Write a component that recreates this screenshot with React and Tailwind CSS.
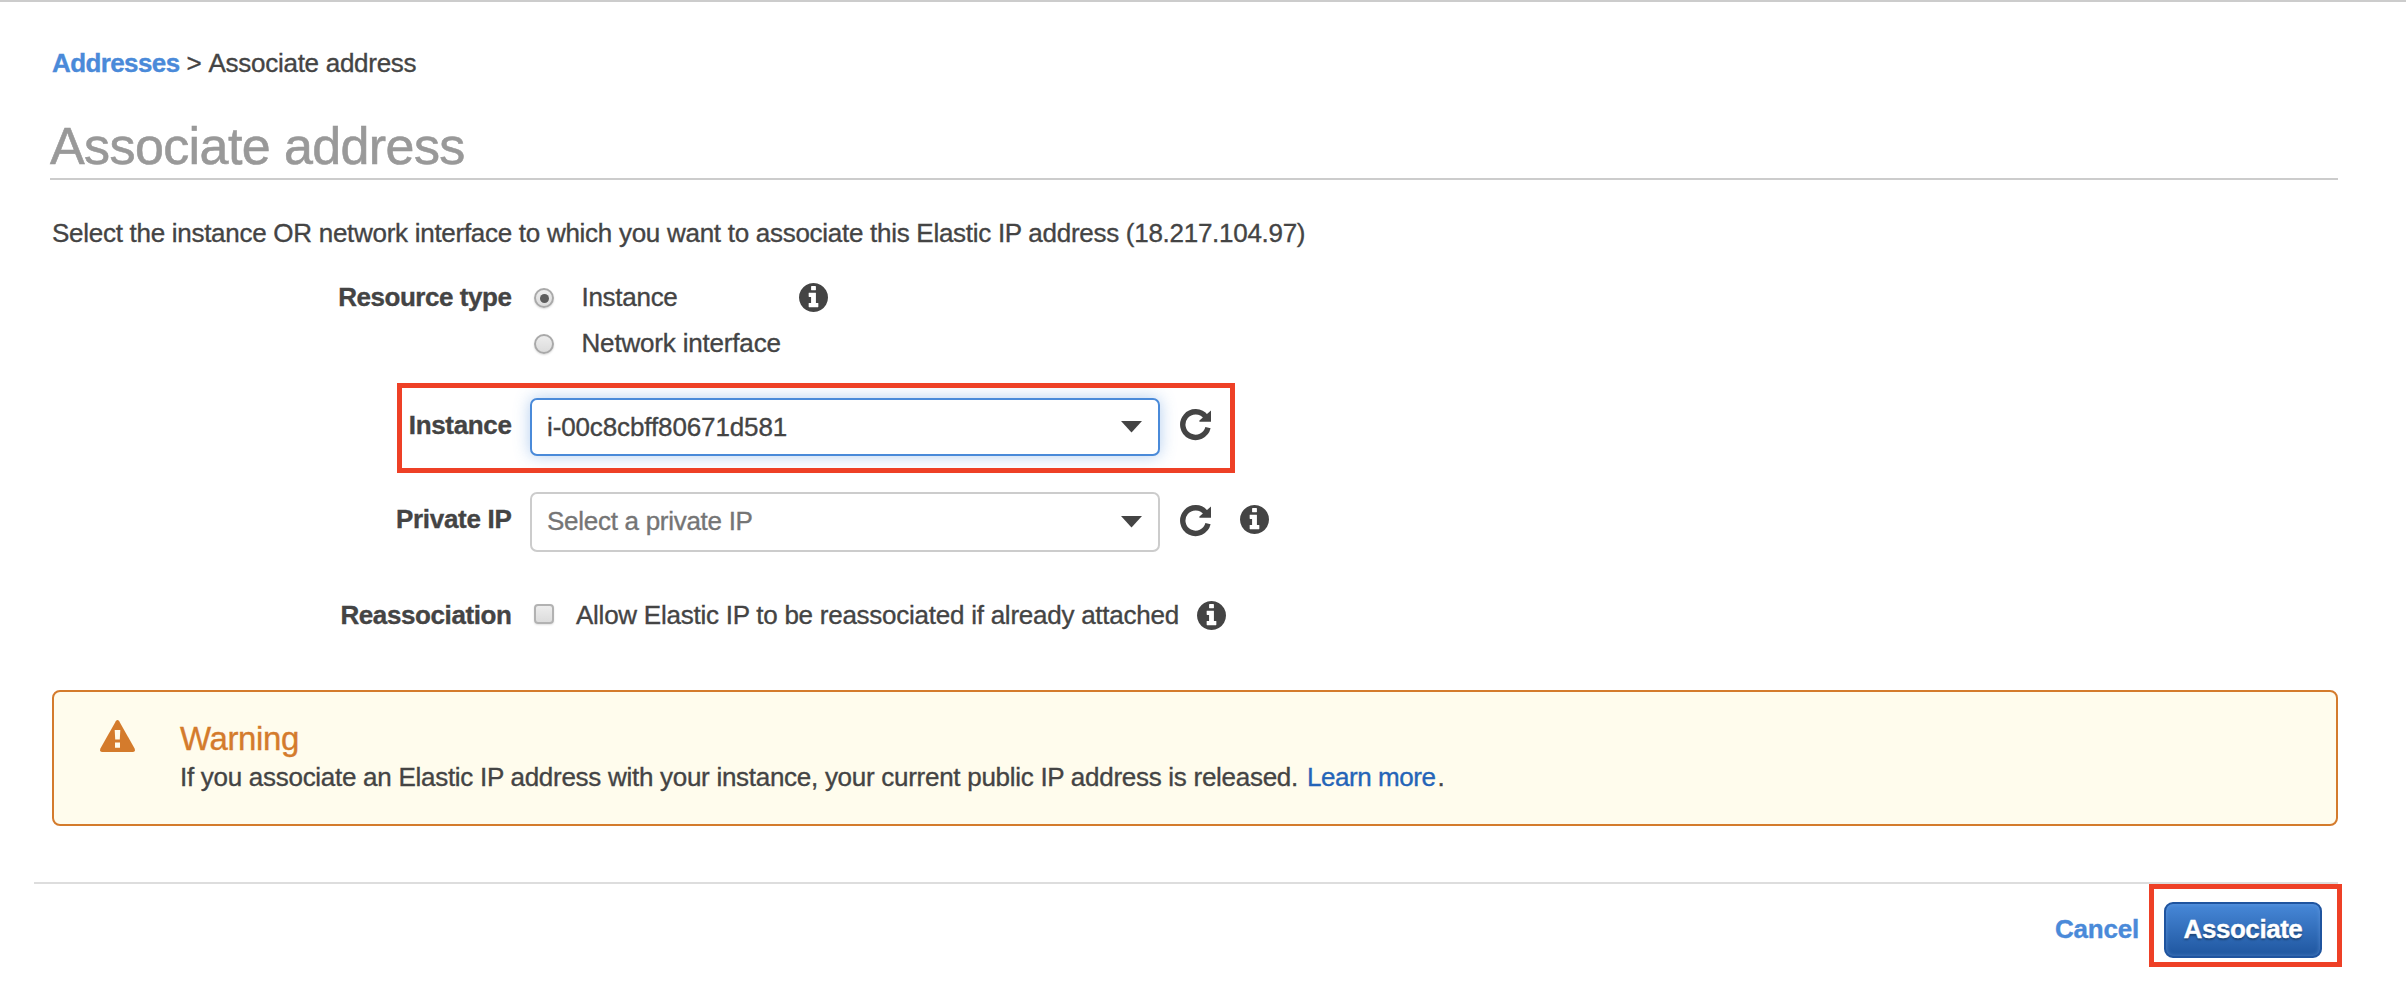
function InfoIcon({ className = "" }) {
  return (
    <svg className={`h-[29px] w-[29px] shrink-0 ${className}`} viewBox="128 128 1536 1536" fill="#444444">
      <path d="M1152 1376v-160q0-14-9-23t-23-9h-96v-512q0-14-9-23t-23-9h-320q-14 0-23 9t-9 23v160q0 14 9 23t23 9h96v320h-96q-14 0-23 9t-9 23v160q0 14 9 23t23 9h448q14 0 23-9t9-23zm-128-896v-160q0-14-9-23t-23-9h-192q-14 0-23 9t-9 23v160q0 14 9 23t23 9h192q14 0 23-9t9-23zm640 416q0 209-103 385.5t-279.5 279.5-385.5 103-385.5-103-279.5-279.5-103-385.5 103-385.5 279.5-279.5 385.5-103 385.5 103 279.5 279.5 103 385.5z" />
    </svg>
  );
}

function RefreshIcon({ className = "" }) {
  return (
    <svg className={`h-8 w-8 shrink-0 ${className}`} viewBox="0 0 32 32">
      <path d="M28 18.7A12.8 12.8 0 1 1 25.8 7.9" fill="none" stroke="#444444" strokeWidth="5.4" />
      <path d="M31 1.6V12.8H19.4V11.4Z" fill="#444444" />
    </svg>
  );
}

function WarningIcon() {
  return (
    <svg className="h-8 w-[35px] shrink-0" viewBox="0 0 35 32">
      <path
        d="M15.8 1.2Q17.5-1 19.2 1.2L34.6 28.6Q35.6 31.8 33 32H2Q-.6 31.8.4 28.6Z"
        fill="#d47b2c"
      />
      <path d="M14.7 10h5.6l-.5 9.6h-4.6ZM15 22.4h5v5.3h-5Z" fill="#fffced" />
    </svg>
  );
}

function Caret() {
  return (
    <svg className="h-3 w-[21px] shrink-0" viewBox="0 0 21 12">
      <path d="M0 0H21L10.5 11.6Z" fill="#444444" />
    </svg>
  );
}

function Radio({ checked }) {
  return (
    <span className="flex h-5 w-5 shrink-0 items-center justify-center rounded-full border-2 border-[#a9a9a9] bg-linear-to-b from-[#ededed] to-[#dcdcdc] shadow-[0_1px_2px_rgba(0,0,0,0.15)]">
      {checked && <span className="h-[9px] w-[9px] rounded-full bg-[#5c5c5c]" />}
    </span>
  );
}

function Label({ children, className = "" }) {
  return (
    <div className={`w-[461px] shrink-0 pr-[1.5px] text-right font-bold ${className}`}>{children}</div>
  );
}

function Highlight({ className }) {
  return <span className={`pointer-events-none absolute border-[5px] border-[#ee4026] ${className}`} />;
}

export default function App() {
  return (
    <div className="h-[986px] w-[2406px] overflow-hidden border-t-2 border-[#cccccc] bg-white pt-[45px] font-['Liberation_Sans',Arial,sans-serif] text-[26px] leading-8 tracking-[-0.28px] whitespace-nowrap text-[#444444] [-webkit-text-stroke:0.35px]">
      <main className="ml-[52px] w-[2286px]">
        <nav className="flex">
          <a className="font-bold tracking-[-0.6px] text-[#4a8ad9]">Addresses</a>
          <span className="ml-[7px] w-[22px]">&gt;</span>
          <span>Associate address</span>
        </nav>

        <h1 className="mt-[37px] -ml-[2px] h-16 border-b-2 border-[#cccccc] text-[52px] leading-[60px] tracking-[-0.6px] text-[#999999] [-webkit-text-stroke:0.6px]">
          Associate address
        </h1>

        <p className="mt-[37px]">
          Select the instance OR network interface to which you want to associate this Elastic IP address
          (18.217.104.97)
        </p>

        <form>
          <div className="mt-8 flex">
            <Label className="tracking-[-0.45px]">Resource type</Label>
            <div className="ml-[21px] flex flex-col gap-[14px]">
              <label className="flex h-8 items-center gap-[27.5px] pt-[2px]">
                <Radio checked />
                <span className="-mt-[2px]">Instance</span>
              </label>
              <label className="flex h-8 items-center gap-[27.5px] pt-[2px]">
                <Radio />
                <span className="-mt-[2px] tracking-[-0.18px]">Network interface</span>
              </label>
            </div>
            <InfoIcon className="mt-[2px] ml-[18px]" />
          </div>

          <div className="relative mt-[39px] flex h-[58px]">
            <Label className="pt-[11px] tracking-[-0.35px]">Instance</Label>
            <div className="ml-[17px] flex w-[630px] items-center justify-between rounded-[7px] border-2 border-[#4a8ad9] bg-white pr-4 pl-[15px] shadow-[0_0_16px_rgba(74,138,217,0.42)]">
              <span className="tracking-[-0.12px]">i-00c8cbff80671d581</span>
              <Caret />
            </div>
            <RefreshIcon className="mt-[11px] ml-5" />
            <Highlight className="-top-[15px] left-[345px] h-[90px] w-[838px]" />
          </div>

          <div className="mt-9 flex h-[60px]">
            <Label className="pt-[11px] tracking-[-0.3px]">Private IP</Label>
            <div className="ml-[17px] flex w-[630px] items-center justify-between rounded-[7px] border-2 border-[#cccccc] bg-white pr-4 pl-[15px]">
              <span className="-mt-[2px] text-[#757575]">Select a private IP</span>
              <Caret />
            </div>
            <RefreshIcon className="mt-[13px] ml-5" />
            <InfoIcon className="mt-[13px] ml-7" />
          </div>

          <div className="mt-[47px] flex h-8">
            <Label className="tracking-[-0.4px]">Reassociation</Label>
            <span className="mt-[5px] ml-[21px] h-5 w-5 shrink-0 rounded-[4px] border-2 border-[#b2b2b2] bg-linear-to-b from-[#ededed] to-[#dcdcdc] shadow-[0_1px_2px_rgba(0,0,0,0.12)]" />
            <span className="ml-[22px] w-[621px] tracking-[-0.25px]">
              Allow Elastic IP to be reassociated if already attached
            </span>
            <InfoIcon className="mt-[2px]" />
          </div>
        </form>

        <section className="mt-[59px] flex h-[136px] rounded-lg border-2 border-[#d47b2c] bg-[#fffced] pt-7 pl-[46px]">
          <WarningIcon />
          <div className="ml-[45px]">
            <h2 className="text-[33px] leading-[37px] tracking-[-0.4px] text-[#d47b2c]">Warning</h2>
            <p className="mt-1">
              If you associate an Elastic IP address with your instance, your current public IP address is released.
              <a className="ml-[9px] tracking-[-0.45px] text-[#2464b8]">Learn more</a>
              <span className="ml-[2px]">.</span>
            </p>
          </div>
        </section>
      </main>

      <footer className="mt-14 ml-[34px] flex w-[2304px] justify-end border-t-2 border-[#dddddd] pt-[18px] pr-4">
        <button type="button" className="mt-[11px] h-8 font-bold tracking-[-0.2px] text-[#4a8ad9]">Cancel</button>
        <div className="relative ml-[25px]">
          <button
            type="button"
            className="h-14 w-[158px] rounded-[9px] border-2 border-[#1f549f] bg-linear-to-b from-[#4788d8] to-[#1f569f] pb-[2px] font-bold tracking-[-0.45px] text-white shadow-[inset_0_0_4px_rgba(110,160,225,0.6)] [text-shadow:0_2px_2px_rgba(0,0,0,0.35)]"
          >
            Associate
          </button>
          <Highlight className="-top-[18px] -left-[15px] h-[83px] w-[193px]" />
        </div>
      </footer>
    </div>
  );
}
